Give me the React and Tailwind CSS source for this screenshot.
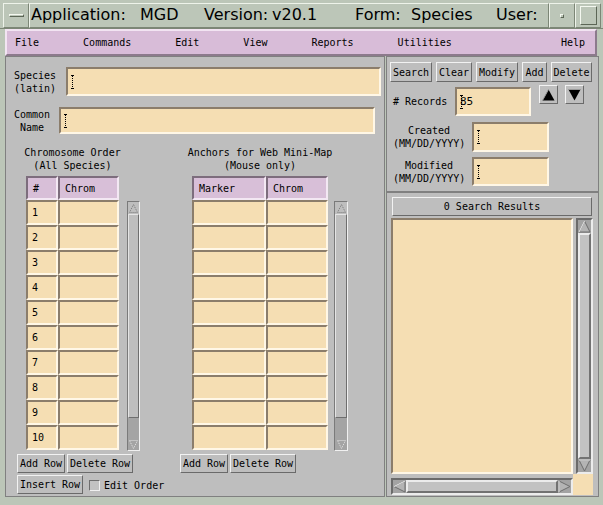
import React from 'react';

// Motif-style bevels
const field = "border-2 border-t-[#8b7d6b] border-l-[#8b7d6b] border-b-[#fff7e6] border-r-[#fff7e6] bg-[#f5deb3]";
const headCell = "border-2 border-t-[#7d6d7d] border-l-[#7d6d7d] border-b-[#f3e8f3] border-r-[#f3e8f3] bg-[#d8bfd8] flex items-center pl-[5px]";
const btn = "border border-t-[#f2f2f2] border-l-[#f2f2f2] border-b-[#6a6a6a] border-r-[#6a6a6a] bg-[#bebebe] flex items-center justify-center whitespace-nowrap shrink-0";
const frameBox = "border border-t-[#eef3ea] border-l-[#eef3ea] border-b-[#7c8676] border-r-[#7c8676]";

function IBeam() {
  return (
    <svg width="5" height="14" viewBox="0 0 5 14" className="shrink-0">
      <path d="M1 0.5h3M1 13.5h3" stroke="#000" strokeWidth="1" />
      <path d="M2.5 1v12" stroke="#000" strokeWidth="1" strokeDasharray="1 1" />
    </svg>
  );
}

function Field({ className, children }) {
  return (
    <div className={`${field} ${className} flex items-center pl-[2px] shrink-0`}>
      <IBeam />
      {children}
    </div>
  );
}

function DottedArrow({ up }) {
  return (
    <svg width="11" height="11" viewBox="0 0 11 11">
      <polygon
        points={up ? "5.5,1.5 1.5,9.5 9.5,9.5" : "1.5,1.5 9.5,1.5 5.5,9.5"}
        fill="none"
        stroke={up ? "#7a7a7a" : "#e4e4e4"}
        strokeWidth="1"
        strokeDasharray="1 1"
      />
    </svg>
  );
}

function SmallScroll({ w }) {
  return (
    <div className={`${w} h-[250px] mt-[55px] border border-t-[#7a7a7a] border-l-[#7a7a7a] border-b-[#f0f0f0] border-r-[#f0f0f0] bg-[#a4a4a4] flex flex-col`}>
      <div className="h-[12px] bg-[#bebebe] flex items-center justify-center">
        <DottedArrow up />
      </div>
      <div className="h-[204px] bg-[#bebebe] border border-t-[#e4e4e4] border-l-[#e4e4e4] border-b-[#6e6e6e] border-r-[#6e6e6e]" />
      <div className="flex-1" />
      <div className="h-[11px] flex items-center justify-center">
        <DottedArrow />
      </div>
    </div>
  );
}

function BevelArrow({ dir }) {
  const pts = {
    up: "6.5,1 1,12 12,12",
    down: "1,1 12,1 6.5,12",
    left: "1,6.5 12,1 12,12",
    right: "1,1 12,6.5 1,12",
  }[dir];
  return (
    <svg width="13" height="13" viewBox="0 0 13 13" className="shrink-0">
      <polygon points={pts} fill="#b4b4b4" stroke="#6e6e6e" strokeWidth="1" />
      {dir === 'up' && <path d="M6.5 1L1 12" stroke="#eeeeee" strokeWidth="1" />}
      {dir === 'down' && <path d="M1 1H12" stroke="#eeeeee" strokeWidth="1" />}
      {dir === 'left' && <path d="M1 6.5L12 1" stroke="#eeeeee" strokeWidth="1" />}
      {dir === 'right' && <path d="M1 1V12" stroke="#eeeeee" strokeWidth="1" />}
    </svg>
  );
}

function Table({ cols, rows, labels }) {
  return (
    <div className="mt-[4px] flex flex-col">
      <div className="flex">
        {cols.map(c => (
          <div key={c.name} className={`${headCell} ${c.w} h-[24px]`}>{c.name}</div>
        ))}
      </div>
      {Array.from({ length: rows }).map((_, i) => (
        <div key={i} className="flex">
          {cols.map((c, j) => (
            <div key={j} className={`${field} ${c.w} h-[25px] flex items-center pl-[4px]`}>
              {labels && j === 0 ? i + 1 : ''}
            </div>
          ))}
        </div>
      ))}
    </div>
  );
}

export default function App() {
  return (
    <div className="w-[603px] h-[505px] bg-[#bcc6b8] overflow-hidden flex flex-col font-['DejaVu_Sans_Mono',monospace] text-[10px] leading-[13px] text-black">
      {/* window title bar */}
      <div className="h-[29px] flex pl-[3px] pt-[3px] pr-[2px] border-b border-b-[#7c8676]">
        <div className={`${frameBox} w-[26px] flex items-center justify-center`}>
          <div className="w-[15px] h-[3px] border-t border-t-[#f4f8f0] border-b border-b-[#5c6656] border-l border-l-[#f4f8f0] border-r border-r-[#5c6656]" />
        </div>
        <div className={`${frameBox} flex-1 flex items-center pb-[1px] font-['DejaVu_Sans',sans-serif] text-[16px] leading-[20px] whitespace-pre`}>
          <span className="w-[110px] pl-[1px]">Application:</span>
          <span className="w-[64px]">MGD</span>
          <span className="w-[68px]">Version:</span>
          <span className="w-[83px]">v20.1</span>
          <span className="w-[56px]">Form:</span>
          <span className="w-[85px]">Species</span>
          <span>User:</span>
        </div>
        <div className={`${frameBox} w-[26px] flex items-center justify-center`}>
          <div className="w-[4px] h-[4px] border border-t-[#f4f8f0] border-l-[#f4f8f0] border-b-[#5c6656] border-r-[#5c6656]" />
        </div>
        <div className={`${frameBox} w-[26px] flex items-center justify-center`}>
          <div className="w-[17px] h-[19px] border border-t-[#f4f8f0] border-l-[#f4f8f0] border-b-[#5c6656] border-r-[#5c6656]" />
        </div>
      </div>

      {/* menu bar */}
      <div className="ml-[5px] w-[592px] h-[27px] bg-[#d8bcd8] border-2 border-t-[#f2e4f2] border-l-[#f2e4f2] border-b-[#8c7a8c] border-r-[#8c7a8c] flex items-center gap-[44px] pl-[8px] pr-[10px]">
        <span>File</span>
        <span>Commands</span>
        <span>Edit</span>
        <span>View</span>
        <span>Reports</span>
        <span>Utilities</span>
        <span className="ml-auto">Help</span>
      </div>

      {/* body */}
      <div className="ml-[5px] h-[441px] flex">
        {/* left form */}
        <div className="w-[380px] h-full bg-[#bebebe] border border-[#808080] flex flex-col">
          <div className="mt-[10px] pl-[8px] flex items-center">
            <div className="w-[46px]">Species<br />(latin)</div>
            <Field className="ml-[6px] w-[315px] h-[29px]" />
          </div>
          <div className="mt-[11px] pl-[8px] flex items-center">
            <div className="w-[36px] text-center">Common<br />Name</div>
            <Field className="ml-[9px] w-[316px] h-[27px]" />
          </div>

          <div className="mt-[12px] pl-[11px] flex">
            {/* chromosome order */}
            <div className="w-[122px] flex flex-col shrink-0">
              <div className="flex">
                <div className="ml-[9px] w-[93px] flex flex-col">
                  <div className="h-[26px] flex flex-col items-center whitespace-nowrap">
                    <span>Chromosome Order</span>
                    <span>(All Species)</span>
                  </div>
                  <Table cols={[{ name: '#', w: 'w-[32px]' }, { name: 'Chrom', w: 'w-[61px]' }]} rows={10} labels />
                </div>
                <div className="ml-[8px]">
                  <SmallScroll w="w-[13px]" />
                </div>
              </div>
              <div className="mt-[3px] flex gap-[2px]">
                <div className={`${btn} w-[48px] h-[19px]`}>Add Row</div>
                <div className={`${btn} w-[66px] h-[19px]`}>Delete Row</div>
              </div>
              <div className="mt-[2px] flex items-center">
                <div className={`${btn} w-[66px] h-[19px]`}>Insert Row</div>
                <div className="ml-[6px] w-[11px] h-[11px] shrink-0 mt-[2px] border border-t-[#6e6e6e] border-l-[#6e6e6e] border-b-[#f0f0f0] border-r-[#f0f0f0] bg-[#c2c2c2]" />
                <span className="ml-[4px] mt-[2px] whitespace-nowrap">Edit Order</span>
              </div>
            </div>

            {/* anchors */}
            <div className="ml-[41px] flex flex-col">
              <div className="flex">
                <div className="ml-[12px] w-[136px] flex flex-col">
                  <div className="h-[26px] flex flex-col items-center whitespace-nowrap">
                    <span>Anchors for Web Mini-Map</span>
                    <span>(Mouse only)</span>
                  </div>
                  <Table cols={[{ name: 'Marker', w: 'w-[74px]' }, { name: 'Chrom', w: 'w-[62px]' }]} rows={10} />
                </div>
                <div className="ml-[6px]">
                  <SmallScroll w="w-[14px]" />
                </div>
              </div>
              <div className="mt-[3px] flex gap-[2px]">
                <div className={`${btn} w-[48px] h-[19px]`}>Add Row</div>
                <div className={`${btn} w-[66px] h-[19px]`}>Delete Row</div>
              </div>
            </div>
          </div>
        </div>

        {/* right side */}
        <div className="ml-[1px] w-[213px] h-full flex flex-col">
          <div className="h-[136px] bg-[#bebebe] border border-[#808080] flex flex-col">
            <div className="mt-[5px] pl-[3px] flex gap-[4px]">
              <div className={`${btn} w-[42px] h-[20px]`}>Search</div>
              <div className={`${btn} w-[36px] h-[20px]`}>Clear</div>
              <div className={`${btn} w-[42px] h-[20px]`}>Modify</div>
              <div className={`${btn} w-[25px] h-[20px]`}>Add</div>
              <div className={`${btn} w-[41px] h-[20px]`}>Delete</div>
            </div>
            <div className="mt-[3px] pl-[6px] flex items-start">
              <div className="w-[62px] mt-[10px] whitespace-nowrap"># Records</div>
              <Field className="mt-[2px] w-[76px] h-[29px]">
                <span className="-ml-[4px] text-[11px]">85</span>
              </Field>
              <div className={`${btn} ml-[8px] w-[19px] h-[19px]`}>
                <svg width="13" height="12" viewBox="0 0 13 12">
                  <polygon points="6.5,0.5 0.5,11.5 12.5,11.5" fill="#000" />
                  <path d="M6.5 0.5L0.5 11.5" stroke="#9a9a9a" strokeWidth="1" />
                </svg>
              </div>
              <div className={`${btn} ml-[7px] w-[19px] h-[19px]`}>
                <svg width="13" height="12" viewBox="0 0 13 12">
                  <polygon points="0.5,0.5 12.5,0.5 6.5,11.5" fill="#000" />
                  <path d="M0.5 0.5H12.5" stroke="#9a9a9a" strokeWidth="1" />
                </svg>
              </div>
            </div>
            <div className="mt-[6px] pl-[6px] flex items-center">
              <div className="w-[72px] text-center whitespace-nowrap">Created<br />(MM/DD/YYYY)</div>
              <Field className="ml-[7px] w-[77px] h-[30px]" />
            </div>
            <div className="mt-[5px] pl-[6px] flex items-center">
              <div className="w-[72px] text-center whitespace-nowrap">Modified<br />(MM/DD/YYYY)</div>
              <Field className="ml-[7px] w-[77px] h-[29px]" />
            </div>
          </div>

          <div className="h-[305px] bg-[#bebebe] border border-[#808080] flex flex-col">
            <div className={`${btn} mt-[4px] ml-[5px] w-[200px] h-[19px]`}>0 Search Results</div>
            <div className="mt-[2px] pl-[4px] flex">
              <div className={`${field} w-[182px] h-[256px]`} />
              <div className="ml-[3px] w-[17px] h-[256px] bg-[#a3a3a3] border-2 border-t-[#6b6b6b] border-l-[#6b6b6b] border-b-[#ececec] border-r-[#ececec] flex flex-col items-center">
                <BevelArrow dir="up" />
                <div className="w-full flex-1 border-2 border-t-[#ececec] border-l-[#ececec] border-b-[#727272] border-r-[#727272] bg-[#c2c2c2]" />
                <BevelArrow dir="down" />
              </div>
            </div>
            <div className="pl-[4px] flex items-start">
              <div className="mt-[4px] w-[182px] h-[17px] bg-[#a3a3a3] border-2 border-t-[#6b6b6b] border-l-[#6b6b6b] border-b-[#ececec] border-r-[#ececec] flex items-center">
                <BevelArrow dir="left" />
                <div className="h-full flex-1 border-2 border-t-[#ececec] border-l-[#ececec] border-b-[#727272] border-r-[#727272] bg-[#c2c2c2]" />
                <BevelArrow dir="right" />
              </div>
              <div className="w-[20px] h-[21px] bg-[#f5deb3]" />
            </div>
          </div>
        </div>
      </div>
    </div>
  );
}
